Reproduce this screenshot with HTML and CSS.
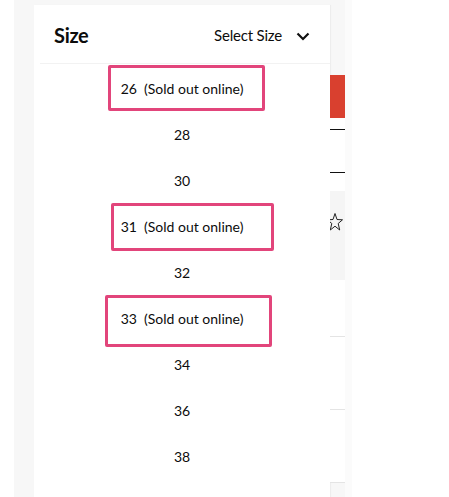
FILE: index.html
```html
<!DOCTYPE html>
<html lang="en">
<head>
  <meta charset="UTF-8">
  <meta name="viewport" content="width=device-width, initial-scale=1.0">
  <title>Size</title>
  <link rel="stylesheet" href="styles.css">
</head>
<body>
  <div class="page">
    <div class="backdrop">
      <div class="dropdown">
        <div class="dropdown-head">
          <span class="label">Size</span>
          <span class="select">Select Size
            <svg class="chevron" width="14" height="9" viewBox="0 0 14 9"><path d="M1.5 1.5 L7 7 L12.5 1.5" fill="none" stroke="#111" stroke-width="2.2"/></svg>
          </span>
        </div>
        <ul class="sizes">
          <li class="row">26&nbsp; (Sold out online)<span class="mark mark-a"></span></li>
          <li class="row">28</li>
          <li class="row">30</li>
          <li class="row">31&nbsp; (Sold out online)<span class="mark mark-b"></span></li>
          <li class="row">32</li>
          <li class="row">33&nbsp; (Sold out online)<span class="mark mark-c"></span></li>
          <li class="row">34</li>
          <li class="row">36</li>
          <li class="row">38</li>
        </ul>
      </div>

      <!-- page behind the dropdown -->
      <div class="behind">
        <div class="gap-top"></div>
        <div class="red-btn"></div>
        <div class="blank-a"></div>
        <div class="rule"></div>
        <div class="blank-b"></div>
        <div class="rule"></div>
        <div class="blank-e"></div>
        <div class="star-zone">
          <svg width="15" height="20" viewBox="0 0 15 20"><path d="M5 1.5 L7 7.5 L12.5 7.8 L8.2 11.5 L9.7 18 L5 14.2 L0.3 18 L1.8 11.5 L-2.5 7.8 L3 7.5 Z" fill="none" stroke="#222" stroke-width="1"/></svg>
        </div>
        <div class="blank-c"></div>
        <div class="soft-rule"></div>
        <div class="blank-d"></div>
        <div class="soft-rule"></div>
        <div class="blank-d"></div>
        <div class="soft-rule"></div>
      </div>
    </div>
  </div>
</body>
</html>
```

FILE: styles.css
```css
body {
  font-family: "Lato", "Liberation Sans", sans-serif;
  margin: 0;
  padding: 0;
  background-color: #fff;
  color: #0c0c0c;
}

.page {
  display: flex;
  height: 497px;
  padding-left: 14px;
  overflow: hidden;
}

.backdrop {
  display: flex;
  align-items: flex-start;
  width: 331px;
  box-sizing: border-box;
  padding: 5px 0 0 20px;
  background-color: #f7f7f7;
  border-right: 7px solid #fbfbfb;
  width: 338px;
}

.dropdown {
  width: 296px;
  height: 492px;
  background-color: #fff;
  box-shadow: 1px 0 1px rgba(0, 0, 0, 0.04);
}

.dropdown-head {
  display: flex;
  align-items: center;
  justify-content: space-between;
  height: 58px;
  padding: 0 20px;
  margin-left: 6px;
  padding-left: 14px;
  border-bottom: 1px solid #f2f2f2;
}

.label {
  font-size: 20px;
  font-weight: 700;
  letter-spacing: -0.3px;
  padding-top: 2px;
}

.select {
  display: flex;
  align-items: center;
  gap: 14px;
  font-size: 15px;
  letter-spacing: -0.2px;
  padding-top: 2px;
}

.chevron {
  margin-top: 2px;
}

.sizes {
  list-style: none;
  margin: 0;
  padding: 2px 0 0;
}

.row {
  position: relative;
  height: 46px;
  line-height: 46px;
  text-align: center;
  font-size: 14px;
}

.mark {
  position: absolute;
  border: 3px solid #e2457b;
  border-radius: 2px;
}

.mark-a {
  left: 74px;
  top: -1px;
  width: 151px;
  height: 40px;
}

.mark-b {
  left: 77px;
  top: -1px;
  width: 157px;
  height: 42px;
}

.mark-c {
  left: 71px;
  top: -1px;
  width: 161px;
  height: 46px;
}

.behind {
  display: flex;
  flex-direction: column;
  width: 15px;
  margin-top: -5px;
}

.gap-top {
  height: 75px;
}

.red-btn {
  height: 43px;
  background-color: #d9402f;
}

.blank-a {
  height: 11px;
  background-color: #fff;
}

.rule {
  height: 1px;
  background-color: #111;
}

.blank-b {
  height: 42px;
  background-color: #fff;
}

.blank-e {
  height: 18px;
  background-color: #fff;
}

.star-zone {
  height: 89px;
  padding-top: 21px;
  background-color: #f5f5f5;
  box-sizing: border-box;
}

.blank-c {
  height: 56px;
  background-color: #fff;
}

.soft-rule {
  height: 1px;
  background-color: #e4e4e4;
}

.blank-d {
  height: 72px;
  background-color: #fff;
}
```
